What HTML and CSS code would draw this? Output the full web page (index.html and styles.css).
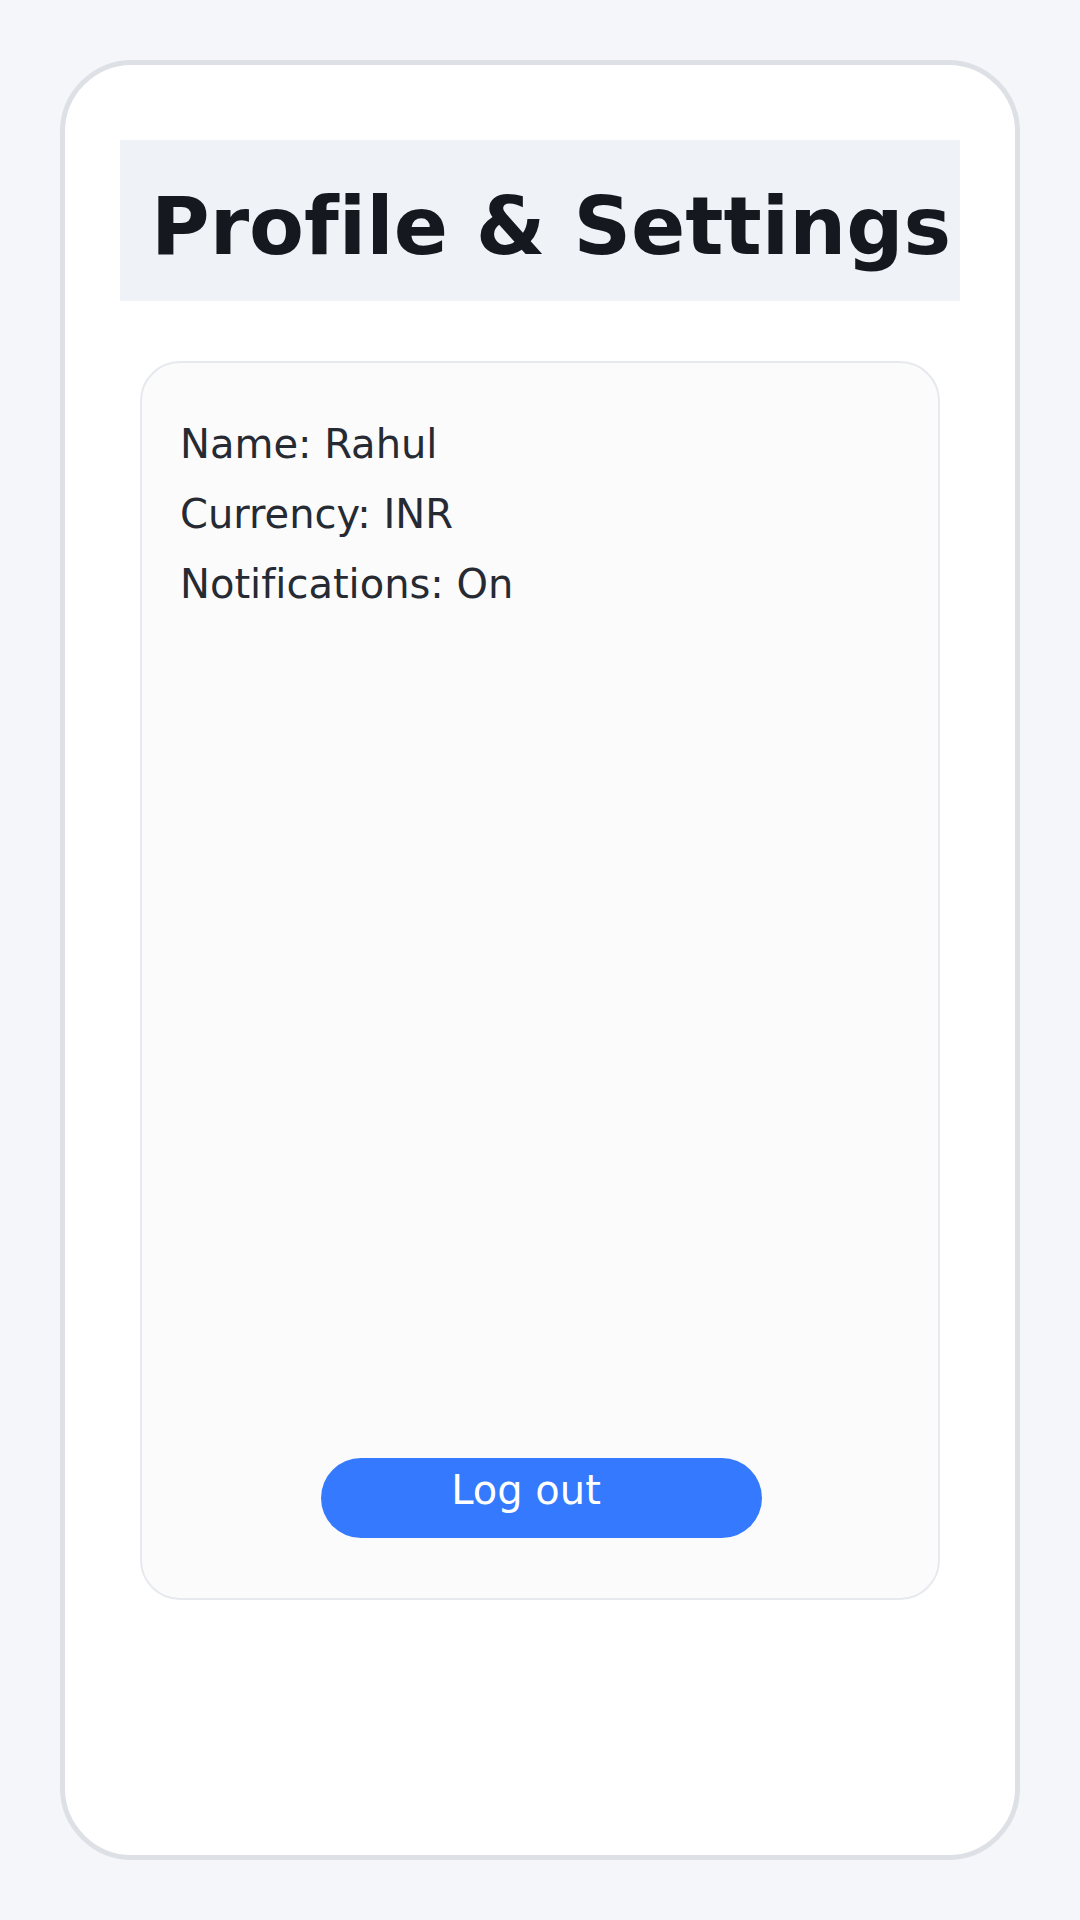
FILE: index.html
```html
<!DOCTYPE html>
<html lang="en">
<head>
<meta charset="utf-8">
<title>Profile &amp; Settings</title>
<link rel="stylesheet" href="styles.css">
</head>
<body>
<div class="phone">
  <div class="title-band">
    <h1 class="title">Profile &amp; Settings</h1>
  </div>
  <div class="card">
    <div class="info">
      <p class="row">Name: Rahul</p>
      <p class="row">Currency: INR</p>
      <p class="row">Notifications: On</p>
    </div>
    <button class="logout" type="button">Log out</button>
  </div>
</div>
</body>
</html>
```
FILE: styles.css
```css
* { box-sizing: border-box; }
html, body { margin: 0; padding: 0; }
body {
  background: #f5f6fa;
  font-family: "DejaVu Sans", "Liberation Sans", sans-serif;
  font-variant-ligatures: none;
  padding: 60px;
  width: 1080px;
  height: 1920px;
}
.phone {
  width: 960px;
  height: 1800px;
  background: #ffffff;
  border: 5px solid #dde1e6;
  border-radius: 72px;
  padding: 75px 55px 255px;
  display: flex;
  flex-direction: column;
}
.title-band {
  background: #eff2f7;
  height: 161px;
  padding: 40px 0 0 31px;
  flex-shrink: 0;
}
.title {
  margin: 0;
  font-size: 80px;
  line-height: 93px;
  font-weight: 700;
  color: #15191f;
  white-space: nowrap;
  font-variant-ligatures: none;
}
.card {
  margin: 60px 20px 0;
  flex: 1;
  background: #fbfbfc;
  border: 2px solid #e6e9ed;
  border-radius: 40px;
  padding: 46px 36px 60px 38px;
  display: flex;
  flex-direction: column;
}
.info { display: flex; flex-direction: column; }
.row {
  margin: 0;
  font-size: 40px;
  line-height: 70px;
  color: #262a33;
  font-variant-ligatures: none;
}
.logout {
  margin-top: auto;
  align-self: center;
  width: 441px;
  height: 80px;
  border: none;
  border-radius: 40px;
  background: #3479fe;
  color: #ffffff;
  font-family: "DejaVu Sans", "Liberation Sans", sans-serif;
  font-size: 40px;
  line-height: 47px;
  padding: 9px 30px 0 0;
  display: flex;
  justify-content: center;
  align-items: flex-start;
}
```
